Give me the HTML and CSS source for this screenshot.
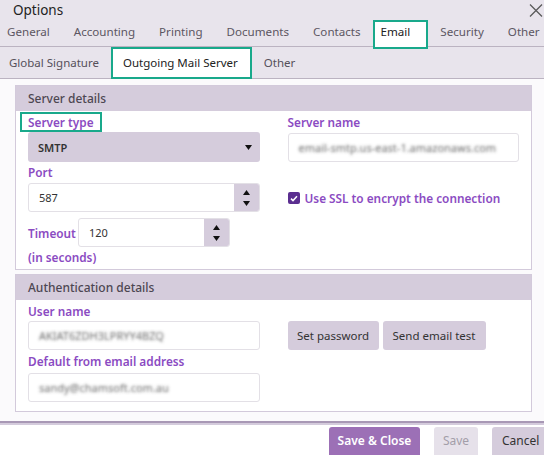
FILE: index.html
```html
<!DOCTYPE html>
<html>
<head>
<meta charset="utf-8">
<link rel="stylesheet" href="styles.css">
</head>
<body>
<div class="app">
  <div class="top">
    <div class="titlebar">
      <span class="title">Options</span>
      <svg class="close" width="14" height="13" viewBox="0 0 14 13"><path d="M1 0.5 L13 12.5 M13 0.5 L1 12.5" stroke="#5a5a5a" stroke-width="1.3" fill="none"/></svg>
    </div>
    <div class="tabs">
      <span class="tab first">General</span>
      <span class="tab">Accounting</span>
      <span class="tab">Printing</span>
      <span class="tab">Documents</span>
      <span class="tab">Contacts</span>
      <span class="tab active">Email</span>
      <span class="tab">Security</span>
      <span class="tab">Other</span>
    </div>
    <div class="subtabs">
      <span class="subtab first">Global Signature</span>
      <span class="subtab active">Outgoing Mail Server</span>
      <span class="subtab">Other</span>
    </div>
  </div>

  <div class="main">
    <section class="group">
      <div class="group-head">Server details</div>
      <div class="group-body">
        <div class="col">
          <div class="label highlight">Server type</div>
          <div class="select">
            <span class="select-text">SMTP</span>
            <svg width="7" height="5" viewBox="0 0 7 5"><path d="M0 0 H7 L3.5 5 Z" fill="#111"/></svg>
          </div>
          <div class="label port-label">Port</div>
          <div class="input spin">
            <span class="value">587</span>
            <span class="spinner">
              <svg width="7" height="5" viewBox="0 0 7 5"><path d="M0 5 H7 L3.5 0 Z" fill="#111"/></svg>
              <svg width="7" height="5" viewBox="0 0 7 5"><path d="M0 0 H7 L3.5 5 Z" fill="#111"/></svg>
            </span>
          </div>
          <div class="timeout-row">
            <span class="label inline">Timeout</span>
            <div class="input spin timeout">
              <span class="value">120</span>
              <span class="spinner">
                <svg width="7" height="5" viewBox="0 0 7 5"><path d="M0 5 H7 L3.5 0 Z" fill="#111"/></svg>
                <svg width="7" height="5" viewBox="0 0 7 5"><path d="M0 0 H7 L3.5 5 Z" fill="#111"/></svg>
              </span>
            </div>
          </div>
          <div class="label seconds">(in seconds)</div>
        </div>
        <div class="col">
          <div class="label">Server name</div>
          <div class="input name-input"><span class="blur">email-smtp.us-east-1.amazonaws.com</span></div>
          <div class="check-row">
            <span class="checkbox">
              <svg width="8" height="7" viewBox="0 0 8 7"><path d="M1 3.6 L3 5.6 L7 1.2" stroke="#fff" stroke-width="1.5" fill="none"/></svg>
            </span>
            <span class="check-label">Use SSL to encrypt the connection</span>
          </div>
        </div>
      </div>
    </section>

    <section class="group second">
      <div class="group-head">Authentication details</div>
      <div class="group-body auth">
        <div class="col">
          <div class="label">User name</div>
          <div class="input"><span class="blur">AKIAT6ZDH3LPRYY4BZQ</span></div>
          <div class="label from-label">Default from email address</div>
          <div class="input"><span class="blur">sandy@chamsoft.com.au</span></div>
        </div>
        <div class="col">
          <div class="btn-row">
            <span class="btn pw">Set password</span>
            <span class="btn test">Send email test</span>
          </div>
        </div>
      </div>
    </section>
  </div>

  <div class="footer">
    <span class="fbtn primary">Save &amp; Close</span>
    <span class="fbtn disabled">Save</span>
    <span class="fbtn cancel">Cancel</span>
  </div>
</div>
</body>
</html>
```

FILE: styles.css
```css
* { box-sizing: border-box; }

body {
  margin: 0;
  width: 544px;
  height: 455px;
  overflow: hidden;
  background: #fff;
  font-family: "Noto Sans", "Open Sans", sans-serif;
}

.app {
  width: 544px;
  height: 455px;
  display: flex;
  flex-direction: column;
  overflow: hidden;
}

.top { background: #e8e4ec; }

.titlebar {
  height: 20px;
  display: flex;
  justify-content: space-between;
  align-items: center;
  padding: 0 1px 0 13px;
}

.title {
  font-size: 13.5px;
  color: #222;
  line-height: 20px;
}

.tabs {
  height: 27px;
  display: flex;
  align-items: flex-start;
  border-bottom: 1px solid #bbb3c1;
}

.tab {
  height: 24px;
  line-height: 24px;
  padding: 0 12px;
  font-size: 11.6px;
  color: #5c5662;
  white-space: nowrap;
}

.tab.first { padding-left: 7px; }

.tab.active {
  position: relative;
  z-index: 2;
  height: 29px;
  line-height: 20px;
  padding: 0 16px 0 6px;
  border: 2px solid #19a98b;
  background: #fff;
  color: #222;
}

.subtabs {
  height: 32px;
  display: flex;
  align-items: flex-start;
  border-bottom: 1px solid #bbb3c1;
}

.subtab {
  height: 31px;
  line-height: 31px;
  padding: 0 12px;
  font-size: 11.5px;
  color: #55505a;
  white-space: nowrap;
}

.subtab.first { padding-left: 9px; }

.subtab.active {
  position: relative;
  z-index: 1;
  height: 32px;
  line-height: 28px;
  padding: 0 12px 0 10px;
  border: 2px solid #19a98b;
  background: #fff;
  color: #222;
}

.main {
  flex: 1;
  background: #fbfafc;
  padding: 6px 0 0 15px;
}

.group {
  width: 517px;
  border: 1px solid #d3cadb;
  background: #fff;
}

.group.second { margin-top: 4px; }

.group-head {
  height: 25px;
  line-height: 25px;
  background: #d5ccdc;
  padding-left: 12px;
  font-size: 12px;
  font-weight: 500;
  color: #4d4752;
}

.group-body {
  display: flex;
  gap: 28px;
  padding: 1px 12px 2px 12px;
}

.group-body.auth { padding-bottom: 9px; }

.col {
  width: 232px;
  display: flex;
  flex-direction: column;
}

.label {
  height: 20px;
  line-height: 20px;
  font-size: 11.8px;
  font-weight: 600;
  color: #8b4bc2;
  white-space: nowrap;
}

.label.highlight {
  align-self: flex-start;
  line-height: 16px;
  border: 2px solid #19a98b;
  padding: 0 6px;
  margin-left: -8px;
}

.label.port-label { height: 21px; line-height: 21px; }
.label.from-label { height: 23px; line-height: 23px; }
.label.inline { width: 50px; }

.select {
  height: 30px;
  background: #d5ccdc;
  border-radius: 3px;
  display: flex;
  align-items: center;
  justify-content: space-between;
  padding: 0 8px 0 10px;
}

.select-text {
  font-size: 11px;
  font-weight: 600;
  color: #333;
}

.input {
  height: 29px;
  border: 1px solid #e3e0e6;
  border-radius: 3px;
  background: #fff;
  display: flex;
  align-items: center;
  padding-left: 10px;
  overflow: hidden;
}

.name-input { margin-top: 1px; }

.value {
  font-size: 11px;
  color: #333;
  flex: 1;
}

.spin { padding-right: 0; }

.spinner {
  width: 25px;
  height: 100%;
  background: #d5ccdc;
  display: flex;
  flex-direction: column;
  align-items: center;
  justify-content: center;
  gap: 6px;
}

.timeout-row {
  display: flex;
  align-items: center;
  margin-top: 6px;
  height: 29px;
}

.input.timeout { width: 152px; }

.blur {
  display: inline-block;
  font-size: 11px;
  color: transparent;
  text-shadow: 0 0 3px rgba(90, 90, 90, 0.9);
  white-space: nowrap;
}

.check-row {
  display: flex;
  align-items: center;
  gap: 5px;
  margin-top: 24px;
  height: 24px;
}

.checkbox {
  width: 12px;
  height: 12px;
  border-radius: 2px;
  background: #5b2e90;
  display: flex;
  align-items: center;
  justify-content: center;
}

.check-label {
  font-size: 11.8px;
  font-weight: 600;
  color: #8b4bc2;
  white-space: nowrap;
}

.btn-row {
  display: flex;
  gap: 4px;
  margin-top: 20px;
}

.btn {
  height: 29px;
  line-height: 29px;
  text-align: center;
  background: #d5ccdc;
  border-radius: 3px;
  font-size: 11.5px;
  color: #333;
  white-space: nowrap;
}

.btn.pw { width: 91px; }
.btn.test { width: 103px; }

.footer {
  height: 34px;
  border-top: 2px solid #a898b5;
  box-shadow: inset 0 2px 0 #d4cbdc;
  display: flex;
  justify-content: flex-end;
  align-items: flex-end;
  gap: 14px;
}

.fbtn {
  height: 28px;
  line-height: 28px;
  text-align: center;
  border-radius: 3px 3px 0 0;
  font-size: 12px;
  white-space: nowrap;
}

.fbtn.primary {
  width: 91px;
  background: #9c70b6;
  color: #fff;
  font-weight: 600;
}

.fbtn.disabled {
  width: 44px;
  background: #e6e1ea;
  color: #a39ea9;
}

.fbtn.cancel {
  width: 52px;
  background: #d5ccdc;
  color: #333;
  border-radius: 3px 0 0 0;
  text-align: left;
  padding-left: 10px;
}
```
